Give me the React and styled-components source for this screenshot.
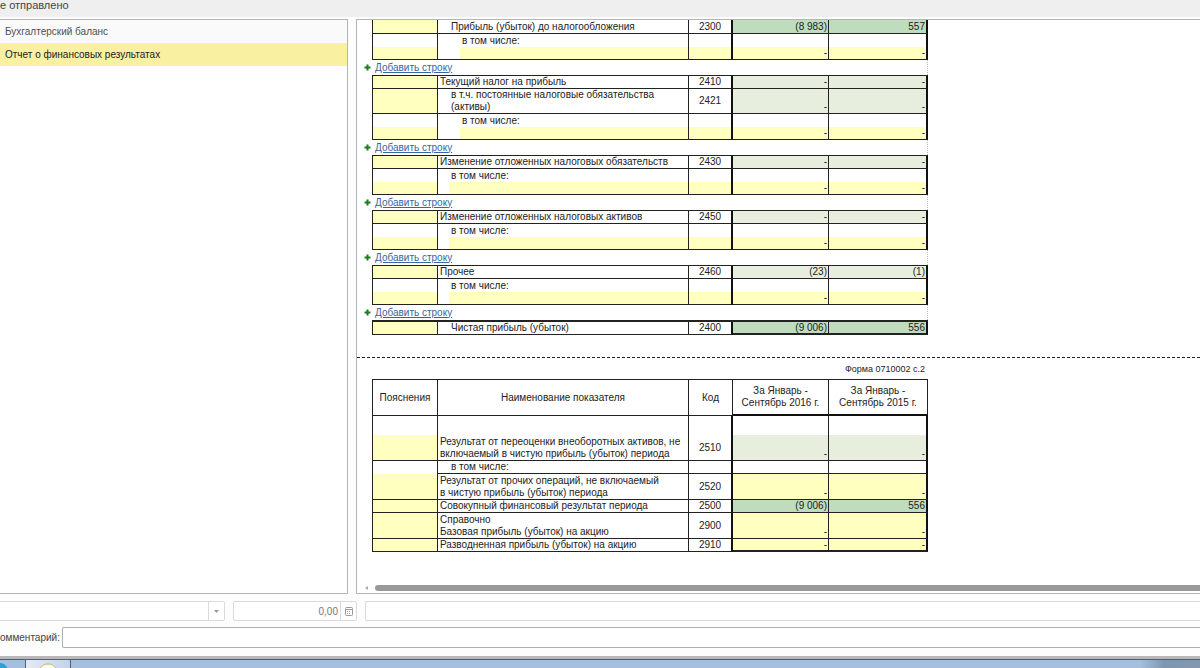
// Package Imports
import React, { useState } from 'react'
import styled, { createGlobalStyle } from 'styled-components'

const GlobalCSS = createGlobalStyle`
    * {
        box-sizing: border-box;
    }

    body {
        margin: 0;
        background-color: #fdfdfd;
        color: #222;
        font-family: "Liberation Sans", Arial, sans-serif;
        font-size: 10px;
    }
`

const fills = {
    none: 'transparent',
    input: '#ffffbf',
    calc: '#e8eedd',
    total: '#bfdcbf',
}

// Styled Components
const PageCSS = styled.div`
    display: flex;
    flex-direction: column;
    height: 100vh;
    overflow: hidden;
`

const StatusBar = styled.header`
    flex: none;
    height: 17px;
    margin-bottom: 2px;
    background-color: #efefef;
    color: #444;
    font-size: 11px;
    line-height: 10px;
`

const PanelsCSS = styled.main`
    display: grid;
    grid-template-columns: 29% 1fr;
    gap: 8px;
    flex: 1;
    min-height: 0;
`

const FormList = styled.nav`
    border: 1px solid #b4b4b4;
    border-left: none;
    background-color: #fff;
`

const FormLink = styled.a`
    display: block;
    height: 23px;
    padding-left: 5px;
    line-height: 23px;
    text-decoration: none;
    color: ${props => props.$active ? '#222' : '#505050'};
    background-color: ${props => props.$active ? '#f9f0a1' : '#fafafa'};
`

const ReportPanel = styled.section`
    display: flex;
    flex-direction: column;
    min-width: 0;
    border: 1px solid #b4b4b4;
    border-right: none;
    background-color: #fff;
`

const ReportBody = styled.div`
    flex: 1;
    min-height: 0;
    overflow: hidden;
`

const Sheet = styled.div`
    width: 571px;
    padding-left: 15px;
`

const ReportTable = styled.table`
    table-layout: fixed;
    width: 100%;
    border-collapse: separate;
    border-spacing: 0;
    border-top: ${props => props.$top} solid #222;
`

const CellCSS = styled.td`
    height: ${props => props.$height}px;
    padding: 0 ${props => props.$align === 'right' ? 1 : 2}px;
    padding-left: ${props => 2 + (props.$indent || 0) * 11}px;
    border: 0 solid #222;
    border-bottom-width: ${props => props.$open ? 0 : props.$heavy ? 2 : 1}px;
    border-right-width: 1px;
    background-color: ${props => fills[props.$fill || 'none']};
    line-height: ${props => props.$heavy ? 11 : 12}px;
    text-align: ${props => props.$align || 'left'};
    vertical-align: ${props => props.$align === 'right' ? 'bottom' : 'middle'};
    white-space: nowrap;

    &:first-child {
        border-left-width: 1px;
    }

    &:nth-child(3),
    &:last-child {
        border-right: 2px solid #111;
    }
`

const IndentFill = styled.div`
    height: ${props => props.$height}px;
    margin: 0 -2px;
    background-color: ${fills.input};
`

const HeadCell = styled.th`
    height: 36px;
    padding: 0;
    border: 0 solid #222;
    border-right-width: 1px;
    border-bottom-width: 1px;
    font-weight: normal;
    line-height: 12px;

    &:first-child {
        border-left-width: 1px;
    }

    &:nth-child(n + 4) {
        border-bottom: 2px solid #111;
    }
`

const AddRowCSS = styled.div`
    display: flex;
    align-items: center;
    gap: 4px;
    height: 15px;
    margin-left: -8px;
    border-right: 1px dotted #bbb;
`

const AddRowLink = styled.a`
    color: #3c64a0;
    font-size: 10px;
    line-height: 12px;
`

const PageBreak = styled.hr`
    height: 0;
    margin: 22px 0 6px;
    border: none;
    border-top: 1px dashed #222;
`

const FormCode = styled.p`
    margin: 0;
    padding-right: 3px;
    height: 15px;
    line-height: 10px;
    font-size: 9px;
    text-align: right;
`

const ScrollRow = styled.div`
    display: flex;
    align-items: center;
    gap: 5px;
    flex: none;
    height: 10px;
    padding-left: 7px;
`

const ScrollThumb = styled.div`
    flex: 1;
    height: 6px;
    border-radius: 3px 0 0 3px;
    background-color: #999;
`

const FieldsRow = styled.div`
    display: flex;
    flex: none;
    gap: 8px;
    height: 20px;
    margin-top: 7px;
`

const FieldBox = styled.div`
    display: flex;
    width: ${props => props.$width};
    border: 1px solid #dadada;
    border-left-width: ${props => props.$cut ? 0 : 1}px;
    border-radius: ${props => props.$cut ? '0 2px 2px 0' : '2px'};
    background-color: #fff;
`

const FieldSelect = styled.select`
    flex: 1;
    min-width: 0;
    appearance: none;
    border: none;
    background: transparent;
`

const FieldInput = styled.input`
    flex: 1;
    min-width: 0;
    padding: 0 2px;
    border: none;
    background: transparent;
    color: #777;
    font: 10px "Liberation Sans", Arial, sans-serif;
    text-align: right;
`

const FieldAddon = styled.span`
    display: flex;
    align-items: center;
    justify-content: center;
    width: 16px;
    border-left: 1px solid #dadada;
`

const FieldButton = styled.button`
    display: flex;
    align-items: center;
    justify-content: center;
    width: 16px;
    padding: 0;
    border: none;
    border-left: 1px solid #dadada;
    background: transparent;
`

const WideInput = styled.input`
    flex: 1;
    min-width: 0;
    border: 1px solid ${props => props.$strong ? '#b0b0b0' : '#dadada'};
    border-right: none;
    border-radius: 2px 0 0 2px;
    background-color: #fff;
`

const CommentRow = styled.div`
    display: flex;
    align-items: stretch;
    flex: none;
    height: 21px;
    margin: 6px 0 8px;
`

const CommentLabel = styled.label`
    width: 62px;
    color: #444;
    line-height: 21px;
`

const TaskBar = styled.footer`
    display: flex;
    align-items: flex-end;
    flex: none;
    height: 12px;
    gap: 17px;
    border-top: 3px solid #b9b7ba;
    background: linear-gradient(90deg, #a5c0de 0, #a5c0de 95%, #7e96b0 97%, #8298b0 100%);
    box-shadow: inset 0 1px 0 #4b5d70;
`

const TaskButton = styled.button`
    display: flex;
    align-items: flex-end;
    justify-content: center;
    width: 46px;
    height: 9px;
    padding: 0;
    border: 1px solid #4d6078;
    border-bottom: none;
    border-radius: 2px 2px 0 0;
    background: linear-gradient(90deg, #e4ebf3, #c3d4e8);
`

// Report data, one array of rows for each table
const sub = indent => [
    { name: 'в том числе:', indent, open: true },
    { fill: 'input', name: '', inset: indent, values: ['-', '-'], note: true },
]

const blocks = [
    [
        { note: true, name: 'Прибыль (убыток) до налогообложения', indent: 1, code: '2300', fill: 'total', values: ['(8 983)', '557'], height: 14 },
        ...sub(2),
    ],
    [
        { note: true, name: 'Текущий налог на прибыль', code: '2410', fill: 'calc', values: ['-', '-'] },
        { note: true, name: 'в т.ч. постоянные налоговые обязательства\n(активы)', indent: 1, code: '2421', fill: 'calc', values: ['-', '-'], height: 25 },
        ...sub(2),
    ],
    [
        { note: true, name: 'Изменение отложенных налоговых обязательств', code: '2430', fill: 'calc', values: ['-', '-'] },
        ...sub(1),
    ],
    [
        { note: true, name: 'Изменение отложенных налоговых активов', code: '2450', fill: 'calc', values: ['-', '-'] },
        ...sub(1),
    ],
    [
        { note: true, name: 'Прочее', code: '2460', fill: 'calc', values: ['(23)', '(1)'] },
        ...sub(1),
    ],
]

const totalBlock = [
    { note: true, name: 'Чистая прибыль (убыток)', indent: 1, code: '2400', fill: 'total', values: ['(9 006)', '556'], heavy: true },
]

const secondPage = [
    { name: '', open: true, height: 19 },
    { note: true, name: 'Результат от переоценки внеоборотных активов, не\nвключаемый в чистую прибыль (убыток) периода', code: '2510', fill: 'calc', values: ['-', '-'], height: 26 },
    { name: 'в том числе:', indent: 1, openNote: true },
    { note: true, name: 'Результат от прочих операций, не включаемый\nв чистую прибыль (убыток) периода', code: '2520', fill: 'input', values: ['-', '-'], height: 26 },
    { note: true, name: 'Совокупный финансовый результат периода', code: '2500', fill: 'total', values: ['(9 006)', '556'] },
    { note: true, name: 'Справочно\nБазовая прибыль (убыток) на акцию', code: '2900', fill: 'input', values: ['-', '-'], height: 26 },
    { note: true, name: 'Разводненная прибыль (убыток) на акцию', code: '2910', fill: 'input', values: ['-', '-'], heavy: true },
]

const Lines = ({ text }) => text.split('\n').map((line, i) => (
    <React.Fragment key={i}>{i > 0 && <br />}{line}</React.Fragment>
))

const Columns = () => (
    <colgroup>
        <col width="66" />
        <col width="251" />
        <col width="44" />
        <col width="96" />
        <col width="99" />
    </colgroup>
)

const Row = ({ data }) => {
    const { note, name, indent, inset, code, fill, values = ['', ''], height = 13, open, openNote, heavy } = data

    return (
        <tr>
            <CellCSS $height={height} $open={open || openNote} $fill={note ? 'input' : 'none'} />
            <CellCSS $height={height} $open={open} $indent={indent || inset}>
                {inset ? <IndentFill $height={height - 1} /> : <Lines text={name} />}
            </CellCSS>
            <CellCSS $height={height} $open={open} $align="center" $fill={inset ? 'input' : 'none'}>{code}</CellCSS>
            {values.map((value, i) => (
                <CellCSS key={i} $height={height} $open={open} $heavy={heavy} $align="right" $fill={fill}>{value}</CellCSS>
            ))}
        </tr>
    )
}

const AddRow = () => (
    <AddRowCSS>
        <svg width="7" height="7" viewBox="0 0 7 7">
            <path d="M3.5 0.5V6.5M0.5 3.5H6.5" stroke="#1d7a1d" strokeWidth="2" />
        </svg>
        <AddRowLink href="#add">Добавить строку</AddRowLink>
    </AddRowCSS>
)

const Report = () => (
    <ReportBody>
        <Sheet>
            {blocks.map((rows, i) => (
                <React.Fragment key={i}>
                    <ReportTable $top={i === 0 ? '0' : '1px'}>
                        <Columns />
                        <tbody>
                            {rows.map((row, j) => <Row key={j} data={row} />)}
                        </tbody>
                    </ReportTable>
                    <AddRow />
                </React.Fragment>
            ))}
            <ReportTable $top="2px">
                <Columns />
                <tbody>
                    {totalBlock.map(row => <Row key={row.code} data={row} />)}
                </tbody>
            </ReportTable>
        </Sheet>
        <PageBreak />
        <Sheet>
            <FormCode>Форма 0710002 с.2</FormCode>
            <ReportTable $top="1px">
                <Columns />
                <thead>
                    <tr>
                        <HeadCell>Пояснения</HeadCell>
                        <HeadCell>Наименование показателя</HeadCell>
                        <HeadCell>Код</HeadCell>
                        <HeadCell>За Январь -<br />Сентябрь 2016 г.</HeadCell>
                        <HeadCell>За Январь -<br />Сентябрь 2015 г.</HeadCell>
                    </tr>
                </thead>
                <tbody>
                    {secondPage.map((row, i) => <Row key={i} data={row} />)}
                </tbody>
            </ReportTable>
        </Sheet>
    </ReportBody>
)

const App = () => {
    const [amount, setAmount] = useState('0,00')
    const [comment, setComment] = useState('')

    return (
        <PageCSS>
            <GlobalCSS />
            <StatusBar>е отправлено</StatusBar>
            <PanelsCSS>
                <FormList>
                    <FormLink href="#balance">Бухгалтерский баланс</FormLink>
                    <FormLink href="#results" $active>Отчет о финансовых результатах</FormLink>
                </FormList>
                <ReportPanel>
                    <Report />
                    <ScrollRow>
                        <svg width="6" height="6" viewBox="0 0 6 6">
                            <path d="M4 1L1 3L4 5Z" fill="#aaa" />
                        </svg>
                        <ScrollThumb />
                    </ScrollRow>
                </ReportPanel>
            </PanelsCSS>
            <FieldsRow>
                <FieldBox $width="225px" $cut>
                    <FieldSelect aria-label="Показатель" />
                    <FieldAddon>
                        <svg width="5" height="3" viewBox="0 0 5 3">
                            <path d="M0 0H5L2.5 3Z" fill="#999" />
                        </svg>
                    </FieldAddon>
                </FieldBox>
                <FieldBox $width="124px">
                    <FieldInput aria-label="Сумма" value={amount} onChange={e => setAmount(e.target.value)} />
                    <FieldButton aria-label="Калькулятор">
                        <svg width="8" height="9" viewBox="0 0 8 9" fill="none" stroke="#999">
                            <rect x="0.5" y="0.5" width="7" height="8" rx="1" />
                            <path d="M1 2.5H7" />
                            <path d="M2 4.5H6M2 6.5H6" strokeDasharray="1 1" />
                        </svg>
                    </FieldButton>
                </FieldBox>
                <WideInput aria-label="Описание" />
            </FieldsRow>
            <CommentRow>
                <CommentLabel htmlFor="comment">омментарий:</CommentLabel>
                <WideInput id="comment" $strong value={comment} onChange={e => setComment(e.target.value)} />
            </CommentRow>
            <TaskBar>
                <svg width="8" height="5" viewBox="0 0 8 5">
                    <path d="M0 0C4 0 6 2 7.5 5H0Z" fill="#2f9fd6" />
                </svg>
                <TaskButton aria-label="1C">
                    <svg width="18" height="5" viewBox="0 0 18 5">
                        <path d="M1 5.5C4 -0.5 14 -0.5 17 5.5" fill="#fdfdf2" stroke="#c8b96a" />
                    </svg>
                </TaskButton>
            </TaskBar>
        </PageCSS>
    )
}

// Export
export default App
